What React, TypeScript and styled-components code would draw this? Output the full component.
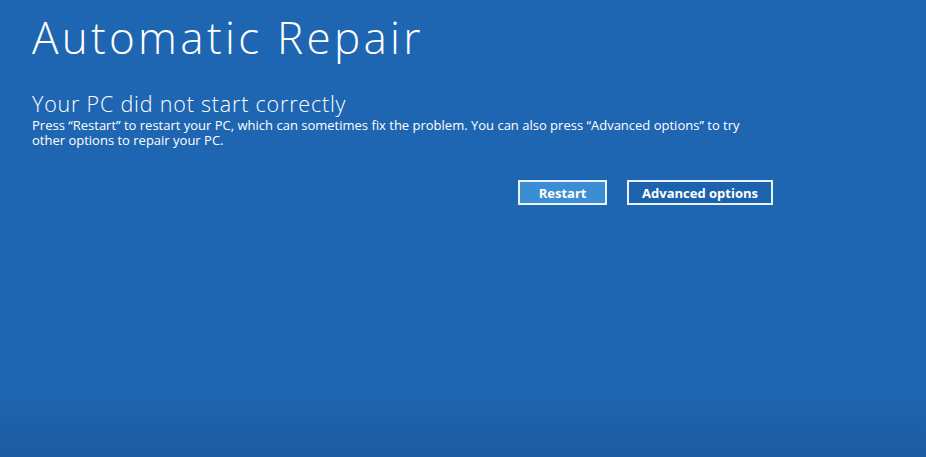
import styled, { createGlobalStyle } from "styled-components";

const GlobalStyle = createGlobalStyle`
  html, body {
    margin: 0;
    padding: 0;
    height: 100%;
  }
  body {
    font-family: "Open Sans", "Liberation Sans", sans-serif;
    background: #1f66b2;
  }
  #root {
    height: 100%;
  }
`;

export default function App() {
  return (
    <>
      <GlobalStyle />
      <Screen>
        <Content>
          <Title>Automatic Repair</Title>
          <Subtitle>Your PC did not start correctly</Subtitle>
          <Message>
            Press “Restart” to restart your PC, which can sometimes fix the
            problem. You can also press “Advanced options” to try other options
            to repair your PC.
          </Message>
          <Actions>
            <Button $primary>Restart</Button>
            <Button>Advanced options</Button>
          </Actions>
        </Content>
      </Screen>
    </>
  );
}

// Style
const Screen = styled.div`
  width: 926px;
  height: 457px;
  box-sizing: border-box;
  padding: 11px 0 0 32px;
  overflow: hidden;
  background: linear-gradient(
    to bottom,
    #1f66b2 0%,
    #1f66b2 84%,
    #1c5ca1 100%
  );
  color: #ffffff;
`;

const Content = styled.div`
  width: 742px;
  display: flex;
  flex-direction: column;
`;

const Title = styled.h1`
  margin: 0;
  font-size: 44px;
  line-height: 52px;
  font-weight: 300;
  letter-spacing: 3.3px;
`;

const Subtitle = styled.h2`
  margin: 29px 0 0;
  font-size: 21.5px;
  line-height: 24px;
  font-weight: 300;
  letter-spacing: 0.8px;
`;

const Message = styled.p`
  margin: 2px 0 0;
  width: 740px;
  font-size: 13px;
  line-height: 15px;
  font-weight: 400;
`;

const Actions = styled.div`
  display: flex;
  justify-content: flex-end;
  gap: 20px;
  margin-top: 32px;
  padding-right: 1px;
`;

const Button = styled.button<{ $primary?: boolean }>`
  height: 25px;
  padding: 0 13px;
  min-width: ${(p) => (p.$primary ? "89px" : "auto")};
  box-sizing: border-box;
  border: 2px solid #e9f2fb;
  background: ${(p) => (p.$primary ? "#3b8ed4" : "#1d62ad")};
  color: #ffffff;
  font-family: "Open Sans", "Liberation Sans", sans-serif;
  font-size: 13px;
  font-weight: 700;
  cursor: pointer;
`;
